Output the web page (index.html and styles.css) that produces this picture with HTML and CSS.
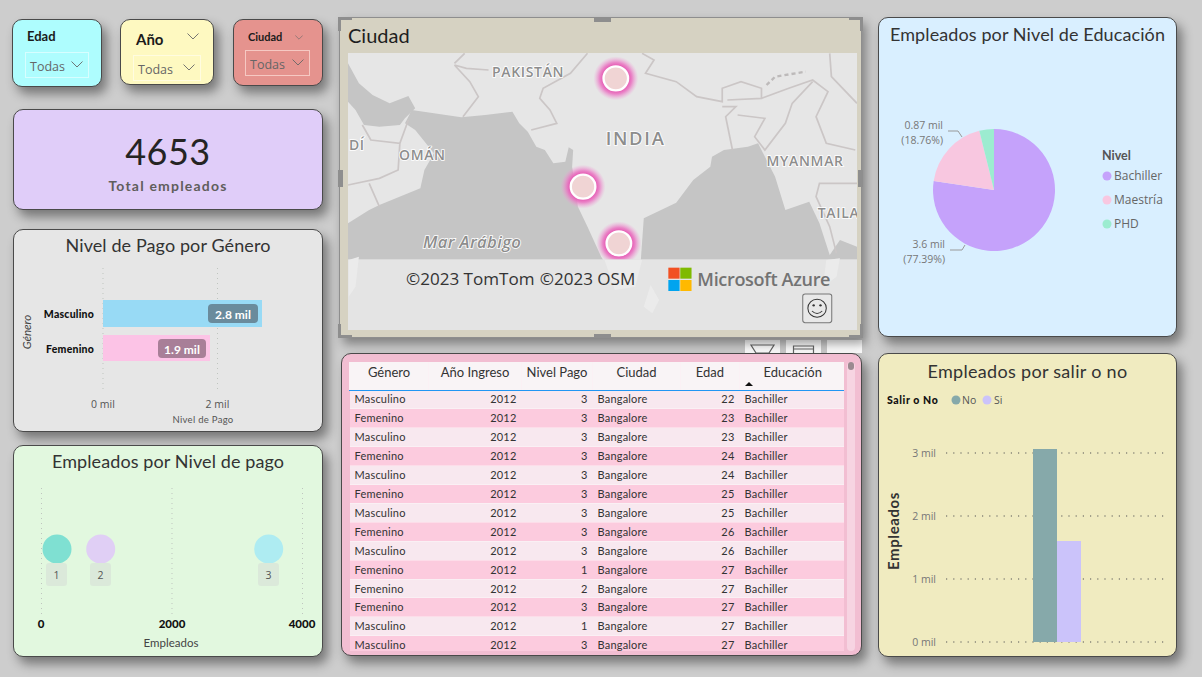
FILE: index.html
```html
<!DOCTYPE html>
<html lang="es">
<head>
<meta charset="utf-8">
<title>Empleados</title>
<link rel="stylesheet" href="styles.css">
</head>
<body>
<main class="report">
  <section class="col col-left">
    <div class="slicers">
      <div class="card slicer slicer-edad">
        <div class="slicer-title">Edad</div>
        <div class="slicer-box"><span>Todas</span><svg class="chev" viewBox="0 0 12 7"><path d="M0.5 0.5 6 6 11.5 0.5"/></svg></div>
      </div>
      <div class="card slicer slicer-ano">
        <div class="slicer-head"><span class="slicer-title">Año</span><svg class="chev" viewBox="0 0 12 7"><path d="M0.5 0.5 6 6 11.5 0.5"/></svg></div>
        <div class="slicer-box"><span>Todas</span><svg class="chev" viewBox="0 0 12 7"><path d="M0.5 0.5 6 6 11.5 0.5"/></svg></div>
      </div>
      <div class="card slicer slicer-ciudad">
        <div class="slicer-head"><span class="slicer-title">Ciudad</span><svg class="chev" viewBox="0 0 12 7"><path d="M0.5 0.5 6 6 11.5 0.5"/></svg></div>
        <div class="slicer-box"><span>Todas</span><svg class="chev" viewBox="0 0 12 7"><path d="M0.5 0.5 6 6 11.5 0.5"/></svg></div>
      </div>
    </div>

    <div class="card kpi">
      <div class="kpi-value">4653</div>
      <div class="kpi-label">Total empleados</div>
    </div>

    <div class="card chart chart-pay">
      <h2 class="chart-title">Nivel de Pago por Género</h2>
      <svg class="plot" viewBox="14 260 308 170">
        <line class="grid-v" x1="103" y1="268" x2="103" y2="392"/>
        <line class="grid-v" x1="217.5" y1="268" x2="217.5" y2="392"/>
        <rect x="103" y="300" width="159" height="27" fill="#98daf5"/>
        <rect x="103" y="335" width="107" height="26" fill="#fcc3e6"/>
        <rect x="208" y="304" width="50" height="19" rx="4" fill="#6a8b9c"/>
        <rect x="158" y="339" width="48" height="19" rx="4" fill="#a87f98"/>
        <text class="t-val" x="233" y="319">2.8 mil</text>
        <text class="t-val" x="182" y="354">1.9 mil</text>
        <text class="t-cat" x="94" y="318">Masculino</text>
        <text class="t-cat" x="94" y="353">Femenino</text>
        <text class="t-axis" x="103" y="408">0 mil</text>
        <text class="t-axis" x="217.5" y="408">2 mil</text>
        <text class="t-axtitle" x="203" y="423">Nivel de Pago</text>
        <text class="t-ytitle" transform="translate(31 332) rotate(-90)">Género</text>
      </svg>
    </div>

    <div class="card chart chart-level">
      <h2 class="chart-title">Empleados por Nivel de pago</h2>
      <svg class="plot" viewBox="14 476 308 180">
        <line class="grid-v" x1="41.5" y1="488" x2="41.5" y2="615"/>
        <line class="grid-v" x1="172" y1="488" x2="172" y2="615"/>
        <line class="grid-v" x1="302.5" y1="488" x2="302.5" y2="615"/>
        <circle cx="57" cy="549" r="14.5" fill="#7fe0d2"/>
        <circle cx="100.7" cy="549" r="14.5" fill="#e0cff5"/>
        <circle cx="268.7" cy="549" r="14.5" fill="#aeecf2"/>
        <rect x="46" y="563" width="21" height="23" rx="3" fill="#dbe9da"/>
        <rect x="90" y="563" width="21" height="23" rx="3" fill="#dbe9da"/>
        <rect x="258" y="563" width="21" height="23" rx="3" fill="#dbe9da"/>
        <text class="t-num" x="56.5" y="579">1</text>
        <text class="t-num" x="100.5" y="579">2</text>
        <text class="t-num" x="268.5" y="579">3</text>
        <text class="t-tick" x="41" y="628">0</text>
        <text class="t-tick" x="172" y="628">2000</text>
        <text class="t-tick" x="302" y="628">4000</text>
        <text class="t-emp" x="171" y="647">Empleados</text>
      </svg>
    </div>
  </section>

  <section class="col col-mid">
    <div class="map-card">
      <h2 class="map-title">Ciudad</h2>
      <svg class="map" viewBox="38 129 1492 831" preserveAspectRatio="none">
        <defs>
          <radialGradient id="glow">
            <stop offset="0.55" stop-color="#e54fae"/>
            <stop offset="0.72" stop-color="#ea74c2" stop-opacity="0.85"/>
            <stop offset="1" stop-color="#f0a0d8" stop-opacity="0"/>
          </radialGradient>
        </defs>
        <rect x="38" y="129" width="1492" height="831" fill="#e6e6e6"/>
        <path class="sea" d="M38 640 100 600 130 585 250 535 262 480 290 430 235 360 205 340 225 300 290 310 370 322 440 315 520 305 540 340 565 365 590 410 615 420 640 460 675 455 685 412 698 420 695 470 712 590 740 650 780 740 800 770 895 770 905 625 1000 578 1050 510 1100 470 1105 440 1140 420 1210 410 1240 400 1290 500 1320 600 1390 575 1420 640 1450 735 1480 690 1530 710 1530 770 38 770Z"/>
        <path class="sea" d="M38 160 70 220 110 255 160 280 215 258 235 295 205 325 190 345 130 350 85 345 60 300 38 275Z"/>
        <path class="border" d="M350 160 380 130M350 165 385 175 450 180M350 165 395 215 420 260 375 320"/>
        <path class="border" d="M740 130 690 190 610 235 600 265 630 300 650 340 575 360"/>
        <path class="border" d="M900 130 935 150 910 190 1000 215 1060 260 1135 275 1135 235 1190 215 1250 235 1250 265 1150 270"/>
        <path class="border" d="M1250 265 1330 235 1400 210 1445 245 1410 320 1440 400 1525 420M1135 290 1175 290 1145 320 1165 420M1180 315 1260 325 1230 380 1260 420 1320 340 1340 280 1400 215M1450 130 1455 200 1530 280"/>
        <path class="border" d="M1530 520 1420 520 1410 560 1450 650 1470 730M80 345 105 390 190 400 215 330M38 525 130 505 185 480 190 400M100 520 130 590"/>
        <path class="border-dash" d="M1265 225 1290 200 1380 185"/>
        <circle cx="823" cy="205" r="66" fill="url(#glow)"/>
        <circle cx="727" cy="530" r="66" fill="url(#glow)"/>
        <circle cx="832" cy="700" r="66" fill="url(#glow)"/>
        <circle class="pin" cx="823" cy="205" r="36"/>
        <circle class="pin" cx="727" cy="530" r="36"/>
        <circle class="pin" cx="832" cy="700" r="36"/>
        <text class="m-label" x="566" y="202">PAKISTÁN</text>
        <text class="m-label m-big" x="881" y="406">INDIA</text>
        <text class="m-label" x="1378" y="467">MYANMAR</text>
        <text class="m-label" x="1476" y="623">TAILA</text>
        <text class="m-label" x="256" y="451">OMÁN</text>
        <text class="m-label" x="64" y="420">DÍ</text>
        <text class="m-label m-sea" x="402" y="714">Mar Arábigo</text>
        <rect x="38" y="748" width="1492" height="212" fill="#e4e4e4"/>
        <path class="faint" d="M40 750 70 740 60 830 40 860ZM790 750 900 750 880 830 820 840ZM925 825 950 870 930 910 905 890ZM1440 750 1480 745 1470 800 1430 830Z"/>
        <text class="m-attr" x="208" y="826">©2023 TomTom</text>
        <text class="m-attr" x="600" y="826">©2023 OSM</text>
        <rect x="977" y="773" width="33" height="33" fill="#f25022"/>
        <rect x="1012" y="773" width="33" height="33" fill="#7fba00"/>
        <rect x="977" y="810" width="33" height="33" fill="#00a4ef"/>
        <rect x="1012" y="810" width="33" height="33" fill="#ffb900"/>
        <text class="m-azure" x="1062" y="828">Microsoft Azure</text>
        <rect class="face-box" x="1371" y="852" width="85" height="86" rx="7"/>
        <circle class="face" cx="1413" cy="895" r="27"/>
        <circle cx="1403" cy="886" r="3.5" fill="#333"/>
        <circle cx="1423" cy="886" r="3.5" fill="#333"/>
        <path class="face" d="M1398 903Q1413 918 1428 903"/>
      </svg>
      <i class="corner c-tl"></i><i class="corner c-tr"></i><i class="corner c-bl"></i><i class="corner c-br"></i>
      <i class="handle h-t"></i><i class="handle h-b"></i><i class="handle h-l"></i><i class="handle h-r"></i>
    </div>

    <div class="visual-actions">
      <span class="action"><svg viewBox="0 0 35 13"><path d="M6 5H29L24 13H11Z"/></svg></span>
      <span class="action"><svg viewBox="0 0 34 13"><path d="M7 13V6H27V13M7 9H27"/></svg></span>
      <span class="action"></span>
    </div>

    <div class="card table-card">
      <div class="table-wrap">
        <table class="grid-table">
          <colgroup><col class="w-gen"><col class="w-ano"><col class="w-niv"><col class="w-ciu"><col class="w-eda"><col class="w-edu"></colgroup>
          <thead>
            <tr><th>Género</th><th>Año Ingreso</th><th>Nivel Pago</th><th>Ciudad</th><th>Edad</th><th class="sorted">Educación</th></tr>
          </thead>
          <tbody>
            <tr><td>Masculino</td><td class="r">2012</td><td class="r">3</td><td>Bangalore</td><td class="r">22</td><td>Bachiller</td></tr>
            <tr><td>Femenino</td><td class="r">2012</td><td class="r">3</td><td>Bangalore</td><td class="r">23</td><td>Bachiller</td></tr>
            <tr><td>Masculino</td><td class="r">2012</td><td class="r">3</td><td>Bangalore</td><td class="r">23</td><td>Bachiller</td></tr>
            <tr><td>Femenino</td><td class="r">2012</td><td class="r">3</td><td>Bangalore</td><td class="r">24</td><td>Bachiller</td></tr>
            <tr><td>Masculino</td><td class="r">2012</td><td class="r">3</td><td>Bangalore</td><td class="r">24</td><td>Bachiller</td></tr>
            <tr><td>Femenino</td><td class="r">2012</td><td class="r">3</td><td>Bangalore</td><td class="r">25</td><td>Bachiller</td></tr>
            <tr><td>Masculino</td><td class="r">2012</td><td class="r">3</td><td>Bangalore</td><td class="r">25</td><td>Bachiller</td></tr>
            <tr><td>Femenino</td><td class="r">2012</td><td class="r">3</td><td>Bangalore</td><td class="r">26</td><td>Bachiller</td></tr>
            <tr><td>Masculino</td><td class="r">2012</td><td class="r">3</td><td>Bangalore</td><td class="r">26</td><td>Bachiller</td></tr>
            <tr><td>Femenino</td><td class="r">2012</td><td class="r">1</td><td>Bangalore</td><td class="r">27</td><td>Bachiller</td></tr>
            <tr><td>Femenino</td><td class="r">2012</td><td class="r">2</td><td>Bangalore</td><td class="r">27</td><td>Bachiller</td></tr>
            <tr><td>Femenino</td><td class="r">2012</td><td class="r">3</td><td>Bangalore</td><td class="r">27</td><td>Bachiller</td></tr>
            <tr><td>Masculino</td><td class="r">2012</td><td class="r">1</td><td>Bangalore</td><td class="r">27</td><td>Bachiller</td></tr>
            <tr><td>Masculino</td><td class="r">2012</td><td class="r">3</td><td>Bangalore</td><td class="r">27</td><td>Bachiller</td></tr>
          </tbody>
        </table>
      </div>
      <div class="scrollbar"><div class="thumb"></div></div>
    </div>
  </section>

  <section class="col col-right">
    <div class="card chart chart-pie">
      <h2 class="chart-title">Empleados por Nivel de Educación</h2>
      <svg class="plot" viewBox="879 50 297 286">
        <path d="M994 190V129A61 61 0 1 1 933.7 180.9Z" fill="#c5a2fb"/>
        <path d="M994 190 933.7 180.9A61 61 0 0 1 979.3 130.8Z" fill="#f8c7e0"/>
        <path d="M994 190 979.3 130.8A61 61 0 0 1 994 129Z" fill="#9cecd0"/>
        <path class="leader" d="M948 131H958L962 137M950 250H962L965 245"/>
        <text class="t-pie" x="943" y="129">0.87 mil</text>
        <text class="t-pie" x="943" y="144">(18.76%)</text>
        <text class="t-pie" x="945" y="248">3.6 mil</text>
        <text class="t-pie" x="945" y="263">(77.39%)</text>
        <text class="t-legend-h" x="1102" y="160">Nivel</text>
        <circle cx="1107" cy="176" r="4.5" fill="#c5a2fb"/>
        <circle cx="1107" cy="200" r="4.5" fill="#f8c7e0"/>
        <circle cx="1107" cy="224" r="4.5" fill="#9cecd0"/>
        <text class="t-legend" x="1114" y="180">Bachiller</text>
        <text class="t-legend" x="1114" y="204">Maestría</text>
        <text class="t-legend" x="1114" y="228">PHD</text>
      </svg>
    </div>

    <div class="card chart chart-exit">
      <h2 class="chart-title">Empleados por salir o no</h2>
      <svg class="plot" viewBox="879 387 297 269">
        <text class="t-leg-b" x="887" y="404">Salir o No</text>
        <circle cx="956" cy="400" r="4.5" fill="#86a9aa"/>
        <circle cx="987" cy="400" r="4.5" fill="#cbc3fa"/>
        <text class="t-leg" x="962" y="404">No</text>
        <text class="t-leg" x="994" y="404">Si</text>
        <line class="grid-h" x1="946" y1="453" x2="1168" y2="453"/>
        <line class="grid-h" x1="946" y1="516" x2="1168" y2="516"/>
        <line class="grid-h" x1="946" y1="579" x2="1168" y2="579"/>
        <line class="grid-h" x1="946" y1="642" x2="1168" y2="642"/>
        <rect x="1033" y="449" width="24" height="193" fill="#86a9aa"/>
        <rect x="1057" y="541" width="24" height="101" fill="#cbc3fa"/>
        <text class="t-y" x="936" y="457">3 mil</text>
        <text class="t-y" x="936" y="520">2 mil</text>
        <text class="t-y" x="936" y="583">1 mil</text>
        <text class="t-y" x="936" y="646">0 mil</text>
        <text class="t-ybig" transform="translate(899 531) rotate(-90)">Empleados</text>
      </svg>
    </div>
  </section>
</main>
</body>
</html>
```

FILE: styles.css
```css
* { box-sizing: border-box; }

html, body {
  margin: 0;
  height: 100%;
  background: #cdcdcd;
  overflow: hidden;
}

.report {
  display: flex;
  align-items: flex-start;
  width: 1202px;
  height: 677px;
  padding-left: 13px;
  font-family: "Comic Sans MS", "Lato", "Noto Sans", sans-serif;
  color: #252423;
}

.col { display: flex; flex-direction: column; }
.col-left { width: 310px; padding-top: 19px; }
.col-mid { width: 522px; margin-left: 17px; padding-top: 17px; }
.col-right { width: 299px; margin-left: 16px; padding-top: 17px; }

.card {
  border: 1px solid #4a4a4a;
  border-radius: 10px;
  box-shadow: 5px 7px 11px rgba(0, 0, 0, 0.42);
}

/* Slicers */
.slicers { display: flex; align-items: flex-start; gap: 18px; margin-left: -1px; }
.slicer { flex: none; display: flex; flex-direction: column; }
.slicer-title { font-weight: 700; color: #1b1b1b; }
.slicer-head { display: flex; align-items: center; justify-content: space-between; }
.slicer-box {
  display: flex;
  align-items: center;
  justify-content: space-between;
  border: 1px solid rgba(255, 255, 255, 0.5);
  padding: 2px 5px 0 4px;
  font-family: "Open Sans", sans-serif;
  font-size: 12.5px;
  color: #666;
}
.chev { display: block; fill: none; stroke: #666; stroke-width: 0.9; }
.slicer-box .chev { width: 12px; height: 7px; margin-top: -4px; }

.slicer-edad { width: 90px; height: 68px; background: #aefdfe; padding: 8px 12px 0; }
.slicer-edad .slicer-title { font-size: 13px; line-height: 17px; margin-left: 2px; }
.slicer-edad .slicer-box { height: 26px; margin-top: 7px; }

.slicer-ano { width: 94px; height: 66px; background: #fef9c1; padding: 9px 12px 0; margin-right: 1px; }
.slicer-ano .slicer-title { font-size: 15px; line-height: 20px; margin-left: 3px; }
.slicer-ano .slicer-head .chev { width: 12px; height: 7px; margin-right: 2px; margin-top: -6px; }
.slicer-ano .slicer-box { height: 26px; margin-top: 6px; }

.slicer-ciudad { width: 90px; height: 67px; background: #e5938e; padding: 9px 12px 0 11px; }
.slicer-ciudad .slicer-title { font-size: 11px; line-height: 16px; margin-left: 3px; }
.slicer-ciudad .slicer-head .chev { width: 8px; height: 5px; margin-right: 7px; }
.slicer-ciudad .slicer-box { height: 26px; margin-top: 5px; border-color: rgba(255, 230, 225, 0.65); }

/* KPI */
.kpi {
  height: 101px;
  margin-top: 22px;
  background: #e0cdf9;
  text-align: center;
  padding-top: 19px;
}
.kpi-value { font-size: 36px; line-height: 44px; letter-spacing: 0.5px; }
.kpi-label { font-size: 14px; line-height: 20px; font-weight: 700; color: #605e5c; letter-spacing: 1.2px; margin-top: 3px; }

/* Chart cards */
.chart { display: flex; flex-direction: column; overflow: hidden; }
.chart-title {
  margin: 0;
  font-size: 18px;
  font-weight: 400;
  line-height: 30px;
  text-align: center;
  color: #333;
  letter-spacing: 0.1px;
}
.plot { display: block; width: 100%; flex: none; }
.chart-pay { height: 203px; margin-top: 19px; background: #e6e6e6; }
.chart-pay .plot { height: 170px; }
.chart-level { height: 212px; margin-top: 13px; background: #e2f8df; }
.chart-level .chart-title { height: 30px; line-height: 30px; }
.chart-level .plot { height: 180px; }
.chart-pie { height: 320px; background: #d9efff; }
.chart-pie .chart-title { letter-spacing: 0.1px; height: 32px; padding-top: 1px; }
.chart-pie .plot { height: 286px; }
.chart-exit { height: 304px; margin-top: 16px; background: #f0ebc0; }
.chart-exit .plot { height: 269px; }
.chart-exit .chart-title { height: 33px; padding-top: 2px; letter-spacing: 0.3px; }

.grid-v { stroke: #bfc5bf; stroke-width: 1; stroke-dasharray: 1 4; }
.grid-h { stroke: #555; stroke-width: 1.2; stroke-dasharray: 1.2 6; }
text { font-family: "Comic Sans MS", "Lato", "Noto Sans", sans-serif; }

.t-val { font-size: 12px; font-weight: 700; fill: #fff; text-anchor: middle; }
.t-cat { font-size: 10.5px; font-weight: 900; fill: #111; text-anchor: end; letter-spacing: 0.2px; }
.t-axis { font-family: "Open Sans", sans-serif; font-size: 10.5px; fill: #555; text-anchor: middle; }
.t-axtitle { font-size: 9.5px; fill: #555; text-anchor: middle; letter-spacing: 0.3px; }
.t-ytitle { font-size: 11.5px; font-style: italic; fill: #444; text-anchor: middle; }
.t-num { font-family: "Open Sans", sans-serif; font-size: 10.5px; fill: #555; text-anchor: middle; }
.t-tick { font-size: 11.5px; font-weight: 900; fill: #111; text-anchor: middle; }
.t-emp { font-size: 11.5px; fill: #444; text-anchor: middle; }
.t-pie { font-family: "Open Sans", sans-serif; font-size: 10.5px; fill: #777; text-anchor: end; }
.t-legend-h { font-size: 12.5px; font-weight: 700; fill: #555; }
.t-legend { font-family: "Open Sans", sans-serif; font-size: 12px; fill: #666; }
.leader { fill: none; stroke: #999; stroke-width: 1; }
.t-leg-b { font-size: 10.5px; font-weight: 900; fill: #111; letter-spacing: 0.6px; }
.t-leg { font-family: "Open Sans", sans-serif; font-size: 10.5px; fill: #555; }
.t-y { font-family: "Open Sans", sans-serif; font-size: 10.5px; fill: #777; text-anchor: end; }
.t-ybig { font-size: 15px; font-weight: 700; fill: #333; text-anchor: middle; letter-spacing: 0.6px; }

/* Map */
.map-card {
  position: relative;
  height: 321px;
  margin-left: -1px;
  padding: 0 3px 0 8px;
  background: #d6d2c2;
  border: 1px solid #8e8e8e;
  box-shadow: 4px 6px 10px rgba(0, 0, 0, 0.38);
}
.map-title {
  margin: 0;
  height: 35px;
  font-size: 20px;
  line-height: 35px;
  font-weight: 400;
  color: #1e1e1e;
}
.map { display: block; width: 509px; height: 277px; }
.sea { fill: #c5c5c5; }
.border { fill: none; stroke: #cbc6c6; stroke-width: 5; }
.border-dash { fill: none; stroke: #bdbaba; stroke-width: 7; stroke-dasharray: 12 9; }
.pin { fill: #f0d4d4; stroke: #fff; stroke-width: 7; }
.m-label {
  font-family: "Open Sans", sans-serif;
  font-size: 41px;
  font-weight: 600;
  fill: #8d8d8d;
  stroke: #fff;
  stroke-width: 5px;
  paint-order: stroke;
  text-anchor: middle;
  letter-spacing: 2px;
}
.m-big { font-size: 54px; letter-spacing: 5px; }
.m-sea { font-size: 49px; font-style: italic; letter-spacing: 1px; }
.faint { fill: #ebebeb; }
.m-attr { font-family: "Open Sans", sans-serif; font-size: 50px; fill: #333; }
.m-azure { font-family: "Open Sans", sans-serif; font-size: 53px; font-weight: 600; fill: #737373; letter-spacing: -1px; }
.face-box { fill: #e8e8e8; stroke: #777; stroke-width: 3; }
.face { fill: none; stroke: #333; stroke-width: 3; }

.corner, .handle { position: absolute; display: block; background: transparent; }
.corner { width: 14px; height: 14px; border: 0 solid #8e8e8e; }
.c-tl { left: -2px; top: -1px; border-width: 3px 0 0 3px; }
.c-tr { right: -2px; top: -1px; border-width: 3px 3px 0 0; }
.c-bl { left: -2px; bottom: -1px; border-width: 0 0 3px 3px; }
.c-br { right: -2px; bottom: -1px; border-width: 0 3px 3px 0; }
.handle { background: #8e8e8e; }
.h-t { left: 254px; top: -1px; width: 17px; height: 5px; }
.h-b { left: 254px; bottom: -1px; width: 17px; height: 4px; }
.h-l { left: -2px; top: 152px; width: 5px; height: 17px; }
.h-r { right: -2px; top: 152px; width: 5px; height: 17px; }

.visual-actions {
  display: flex;
  justify-content: flex-end;
  align-items: flex-end;
  gap: 6px;
  height: 15px;
}
.action { display: block; width: 35px; height: 13px; background: #fff; overflow: hidden; }
.action svg { display: block; width: 35px; height: 13px; fill: none; stroke: #666; stroke-width: 1.2; }

/* Table */
.table-card {
  display: flex;
  height: 303px;
  padding: 8px 6px 4px 7px;
  margin-left: 1px;
  background: #f2bed2;
}
.table-wrap { width: 496px; height: 289px; overflow: hidden; }
.grid-table {
  width: 496px;
  table-layout: fixed;
  border-collapse: collapse;
  font-size: 11px;
  color: #333;
}
.w-gen { width: 79px; }
.w-ano { width: 93px; }
.w-niv { width: 71px; }
.w-ciu { width: 88px; }
.w-eda { width: 59px; }
.w-edu { width: 106px; }
.grid-table th {
  position: relative;
  height: 28px;
  padding: 1px 0 8px;
  font-size: 13px;
  font-weight: 400;
  line-height: 18px;
  background: #f9f4f6;
  border-bottom: 1px solid #2196f3;
  border-left: 1px solid #fbf1f5;
  vertical-align: top;
  white-space: nowrap;
}
.grid-table td {
  height: 18.92px;
  padding: 0 5px;
  line-height: 16px;
  letter-spacing: 0.2px;
  white-space: nowrap;
  border-bottom: 1px solid rgba(255, 255, 255, 0.35);
}
.grid-table tbody tr:nth-child(odd) td { background: #f8e8ef; }
.grid-table tbody tr:nth-child(even) td { background: #fccbde; }
.grid-table .r { text-align: right; }
.sorted::after {
  content: "";
  position: absolute;
  left: 5px;
  top: 20px;
  border: 4px solid transparent;
  border-top: 0;
  border-bottom: 4px solid #111;
}
.scrollbar {
  width: 8px;
  height: 289px;
  margin-left: 3px;
  background: #f7d4e2;
  border-radius: 4px;
}
.thumb { width: 6px; height: 8px; margin-left: 1px; border-radius: 3px; background: #9a8a90; }
```
